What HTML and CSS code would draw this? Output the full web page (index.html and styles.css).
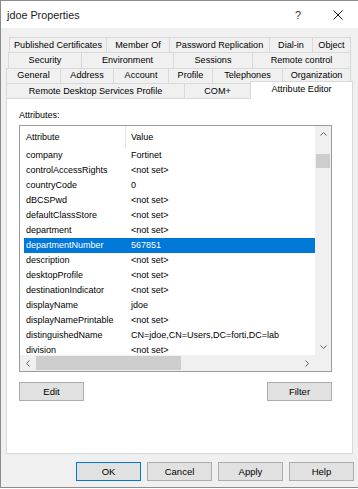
FILE: index.html
```html
<!DOCTYPE html>
<html lang="en">
  <head>
    <meta charset="UTF-8" />
    <meta name="viewport" content="width=device-width, initial-scale=1.0" />
    <title>jdoe Properties</title>
    <link rel="stylesheet" href="styles.css">
  </head>
  <body>
    <div class="window">
      <div class="titlebar">
        <span class="title">jdoe Properties</span>
        <span class="title-btn help-btn">?</span>
        <span class="title-btn close-btn">
          <svg width="10" height="10" viewBox="0 0 10 10">
            <path d="M0.5 0.5 L9.5 9.5 M9.5 0.5 L0.5 9.5" stroke="#1a1a1a" stroke-width="1" fill="none" />
          </svg>
        </span>
      </div>

      <div class="dialog-body">
        <div class="tabs">
          <div class="tab-row row-1">
            <div class="tab">Published Certificates</div>
            <div class="tab">Member Of</div>
            <div class="tab">Password Replication</div>
            <div class="tab">Dial-in</div>
            <div class="tab">Object</div>
          </div>
          <div class="tab-row row-2">
            <div class="tab">Security</div>
            <div class="tab">Environment</div>
            <div class="tab">Sessions</div>
            <div class="tab">Remote control</div>
          </div>
          <div class="tab-row row-3">
            <div class="tab">General</div>
            <div class="tab">Address</div>
            <div class="tab">Account</div>
            <div class="tab">Profile</div>
            <div class="tab">Telephones</div>
            <div class="tab">Organization</div>
          </div>
          <div class="tab-row row-4">
            <div class="tab">Remote Desktop Services Profile</div>
            <div class="tab">COM+</div>
            <div class="tab active">Attribute Editor</div>
          </div>
        </div>

        <div class="panel">
          <div class="field-label">Attributes:</div>

          <div class="list">
            <div class="list-view">
              <div class="list-head">
                <div class="head-cell attr-head">Attribute</div>
                <div class="head-cell">Value</div>
              </div>
              <div class="list-rows">
                <div class="list-row"><span class="cell-attr">company</span><span class="cell-value">Fortinet</span></div>
                <div class="list-row"><span class="cell-attr">controlAccessRights</span><span class="cell-value">&lt;not set&gt;</span></div>
                <div class="list-row"><span class="cell-attr">countryCode</span><span class="cell-value">0</span></div>
                <div class="list-row"><span class="cell-attr">dBCSPwd</span><span class="cell-value">&lt;not set&gt;</span></div>
                <div class="list-row"><span class="cell-attr">defaultClassStore</span><span class="cell-value">&lt;not set&gt;</span></div>
                <div class="list-row"><span class="cell-attr">department</span><span class="cell-value">&lt;not set&gt;</span></div>
                <div class="list-row selected"><span class="cell-attr">departmentNumber</span><span class="cell-value">567851</span></div>
                <div class="list-row"><span class="cell-attr">description</span><span class="cell-value">&lt;not set&gt;</span></div>
                <div class="list-row"><span class="cell-attr">desktopProfile</span><span class="cell-value">&lt;not set&gt;</span></div>
                <div class="list-row"><span class="cell-attr">destinationIndicator</span><span class="cell-value">&lt;not set&gt;</span></div>
                <div class="list-row"><span class="cell-attr">displayName</span><span class="cell-value">jdoe</span></div>
                <div class="list-row"><span class="cell-attr">displayNamePrintable</span><span class="cell-value">&lt;not set&gt;</span></div>
                <div class="list-row"><span class="cell-attr">distinguishedName</span><span class="cell-value">CN=jdoe,CN=Users,DC=forti,DC=lab</span></div>
                <div class="list-row"><span class="cell-attr">division</span><span class="cell-value">&lt;not set&gt;</span></div>
              </div>
            </div>

            <div class="vscroll">
              <div class="scroll-btn">
                <svg width="7" height="4" viewBox="0 0 7 4"><polyline points="0.5,3.5 3.5,0.5 6.5,3.5" fill="none" stroke="#606060" /></svg>
              </div>
              <div class="scroll-track">
                <div class="v-thumb"></div>
              </div>
              <div class="scroll-btn">
                <svg width="7" height="4" viewBox="0 0 7 4"><polyline points="0.5,0.5 3.5,3.5 6.5,0.5" fill="none" stroke="#606060" /></svg>
              </div>
            </div>

            <div class="hscroll">
              <div class="scroll-btn">
                <svg width="4" height="7" viewBox="0 0 4 7"><polyline points="3.5,0.5 0.5,3.5 3.5,6.5" fill="none" stroke="#606060" /></svg>
              </div>
              <div class="scroll-track h-track">
                <div class="h-thumb"></div>
              </div>
              <div class="scroll-btn">
                <svg width="4" height="7" viewBox="0 0 4 7"><polyline points="0.5,0.5 3.5,3.5 0.5,6.5" fill="none" stroke="#606060" /></svg>
              </div>
            </div>

            <div class="scroll-corner"></div>
          </div>

          <div class="panel-actions">
            <button class="btn">Edit</button>
            <button class="btn">Filter</button>
          </div>
        </div>

        <div class="dialog-actions">
          <button class="btn default">OK</button>
          <button class="btn">Cancel</button>
          <button class="btn">Apply</button>
          <button class="btn">Help</button>
        </div>
      </div>
    </div>
  </body>
</html>
```

FILE: styles.css
```css
* {
  margin: 0;
  padding: 0;
  box-sizing: border-box;
}

body {
  font-family: "Liberation Sans", Arial, sans-serif;
  font-size: 9px;
  color: #000000;
  background: #ffffff;
  width: 358px;
  height: 489px;
  overflow: hidden;
}

.window {
  border-top: 1px solid #8c8c8c;
  border-left: 1px solid #8c8c8c;
  border-bottom: 1px solid #8c8c8c;
  background: #f0f0f0;
}

/* title bar */

.titlebar {
  height: 27px;
  background: #ffffff;
  display: flex;
  align-items: center;
  padding: 0 10px 0 6px;
}

.title {
  flex: 1;
  font-size: 10.8px;
  color: #1a1a1a;
}

.title-btn {
  width: 20px;
  display: flex;
  justify-content: center;
  align-items: center;
}

.help-btn {
  font-size: 11px;
  color: #333333;
  margin-right: 20px;
}

/* dialog body */

.dialog-body {
  padding: 9px 5px 6px 5px;
}

.tabs {
  display: flex;
  flex-direction: column;
}

.tab-row {
  display: grid;
  height: 15.3px;
}

.row-1 {
  margin-left: 3px;
  grid-template-columns: 97px 63px 100px 43px 39px;
}

.row-2 {
  margin-left: 2px;
  grid-template-columns: 73px 92px 79px 99px;
}

.row-3 {
  grid-template-columns: 54px 53px 55px 44px 70px 69px;
}

.row-4 {
  grid-template-columns: 178px 66px 103px;
}

.tab {
  display: flex;
  align-items: center;
  justify-content: center;
  white-space: nowrap;
  font-size: 9.1px;
  padding-bottom: 1px;
  border-top: 1px solid #d9d9d9;
  border-left: 1px solid #d9d9d9;
  background: #f0f0f0;
}

.tab:last-child {
  border-right: 1px solid #d9d9d9;
}

.tab.active {
  position: relative;
  z-index: 1;
  margin-top: -2px;
  margin-bottom: -1px;
  background: #ffffff;
  padding-bottom: 3px;
}

/* tab page */

.panel {
  height: 356px;
  background: #ffffff;
  border: 1px solid #d9d9d9;
  padding: 10px 20px 0 12px;
}

.field-label {
  height: 12px;
  line-height: 12px;
  margin-bottom: 4px;
}

.list {
  height: 247px;
  border: 1px solid #9a9a9a;
  display: grid;
  grid-template-columns: 1fr 16px;
  grid-template-rows: 1fr 16px;
  overflow: hidden;
}

.list-view {
  overflow: hidden;
}

.list-head {
  display: grid;
  grid-template-columns: 106px 1fr;
  height: 22px;
}

.head-cell {
  display: flex;
  align-items: center;
  padding-left: 5px;
}

.attr-head {
  padding-left: 6px;
  border-right: 1px solid #e5e5e5;
}

.list-row {
  display: grid;
  grid-template-columns: 102px 1fr;
  margin-left: 4px;
  height: 15px;
  line-height: 15px;
  white-space: nowrap;
}

.cell-attr {
  padding-left: 2px;
  overflow: hidden;
}

.cell-value {
  padding-left: 5px;
}

.list-row.selected {
  background: #0078d7;
  color: #ffffff;
}

/* scroll bars */

.vscroll {
  background: #f0f0f0;
  display: flex;
  flex-direction: column;
}

.hscroll {
  background: #f0f0f0;
  display: flex;
}

.scroll-btn {
  width: 16px;
  height: 16px;
  flex: none;
  display: flex;
  align-items: center;
  justify-content: center;
}

.scroll-track {
  flex: 1;
}

.v-thumb {
  margin: 12px 1px 0;
  height: 14px;
  background: #cdcdcd;
}

.h-track {
  display: flex;
  align-items: center;
}

.h-thumb {
  width: 145px;
  height: 14px;
  background: #cdcdcd;
}

.scroll-corner {
  background: #f0f0f0;
}

/* buttons */

.btn {
  width: 65px;
  height: 19px;
  font-family: "Liberation Sans", Arial, sans-serif;
  font-size: 9.5px;
  color: #000000;
  background: #e1e1e1;
  border: 1px solid #adadad;
}

.btn.default {
  border-color: #0078d7;
}

.panel-actions {
  display: flex;
  justify-content: space-between;
  margin-top: 10px;
}

.dialog-actions {
  display: flex;
  justify-content: flex-end;
  gap: 6px;
  margin-top: 8px;
  margin-right: -1px;
}
```
